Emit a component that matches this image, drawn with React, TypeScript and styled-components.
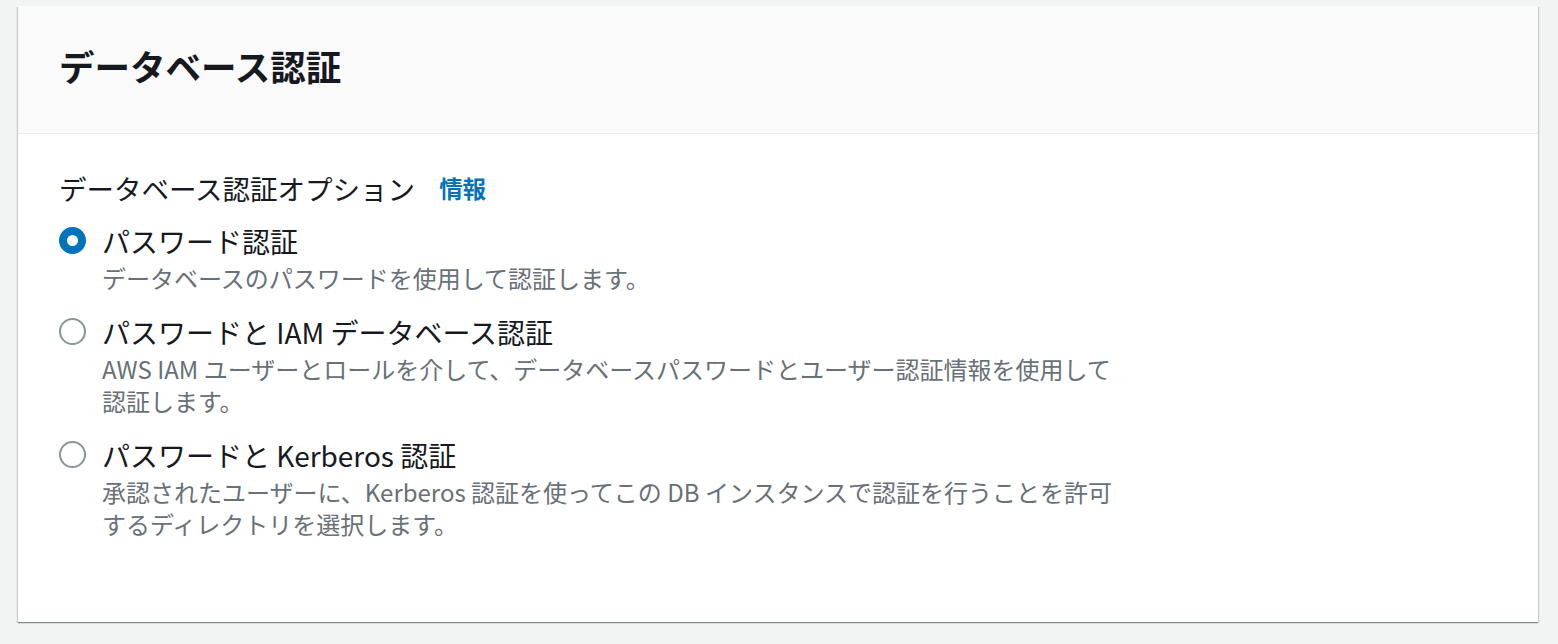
import React from 'react';
import styled, { createGlobalStyle } from 'styled-components';

const options = [
  {
    id: 'password',
    label: 'パスワード認証',
    description: 'データベースのパスワードを使用して認証します。',
  },
  {
    id: 'iam',
    label: 'パスワードと IAM データベース認証',
    description:
      'AWS IAM ユーザーとロールを介して、データベースパスワードとユーザー認証情報を使用して認証します。',
  },
  {
    id: 'kerberos',
    label: 'パスワードと Kerberos 認証',
    description:
      '承認されたユーザーに、Kerberos 認証を使ってこの DB インスタンスで認証を行うことを許可するディレクトリを選択します。',
  },
];

const GlobalStyle = createGlobalStyle`
  html, body {
    margin: 0;
    padding: 0;
    background: #f2f3f3;
  }
  body {
    font-family: "Noto Sans CJK JP", "Noto Sans", sans-serif;
    color: #16191f;
  }
`;

const App: React.FC = () => {
  const [selected, setSelected] = React.useState('password');

  return (
    <>
      <GlobalStyle />
      <Page>
        <Card>
          <CardHeader>
            <Title>データベース認証</Title>
          </CardHeader>
          <CardBody>
            <FieldLabel>
              データベース認証オプション
              <InfoLink href="#">情報</InfoLink>
            </FieldLabel>
            <RadioGroup>
              {options.map((option) => (
                <RadioItem key={option.id} onClick={() => setSelected(option.id)}>
                  <RadioControl $checked={selected === option.id} />
                  <RadioText>
                    <RadioLabel>{option.label}</RadioLabel>
                    <RadioDescription>{option.description}</RadioDescription>
                  </RadioText>
                </RadioItem>
              ))}
            </RadioGroup>
          </CardBody>
        </Card>
      </Page>
    </>
  );
};

const Page = styled.div`
  padding: 6px 20px 20px 18px;
`;

const Card = styled.div`
  background: #ffffff;
  box-shadow: 0 1px 1px 0 rgba(0, 28, 36, 0.3), 1px 1px 1px 0 rgba(0, 28, 36, 0.15),
    -1px 1px 1px 0 rgba(0, 28, 36, 0.15);
`;

const CardHeader = styled.div`
  background: #fafafa;
  border-bottom: 1px solid #eaeded;
  height: 128px;
  padding: 0 41px 7px;
  display: flex;
  align-items: center;
  box-sizing: border-box;
`;

const Title = styled.h2`
  margin: 0;
  font-size: 35.5px;
  line-height: 40px;
  font-weight: 700;
  color: #16191f;
`;

const CardBody = styled.div`
  padding: 36px 41px 82px;
`;

const FieldLabel = styled.div`
  display: flex;
  align-items: center;
  font-size: 27.5px;
  line-height: 36px;
  color: #16191f;
`;

const InfoLink = styled.a`
  margin-left: 24px;
  font-size: 23.5px;
  font-weight: 700;
  color: #0073bb;
  text-decoration: none;
`;

const RadioGroup = styled.div`
  display: flex;
  flex-direction: column;
  gap: 20px;
  margin-top: 17px;
`;

const RadioItem = styled.label`
  display: flex;
  align-items: flex-start;
  gap: 16px;
  cursor: pointer;
`;

const RadioControl = styled.span<{ $checked: boolean }>`
  flex: none;
  width: 27px;
  height: 27px;
  margin-top: 4px;
  box-sizing: border-box;
  border-radius: 50%;
  background: #ffffff;
  border: ${(p) => (p.$checked ? '8.5px solid #0073bb' : '2.5px solid #879596')};
`;

const RadioText = styled.div`
  display: flex;
  flex-direction: column;
  gap: 3px;
`;

const RadioLabel = styled.span`
  font-size: 28px;
  line-height: 36px;
  color: #16191f;
`;

const RadioDescription = styled.span`
  font-size: 24px;
  line-height: 32px;
  color: #687078;
  max-width: 1015px;
`;

export default App;
